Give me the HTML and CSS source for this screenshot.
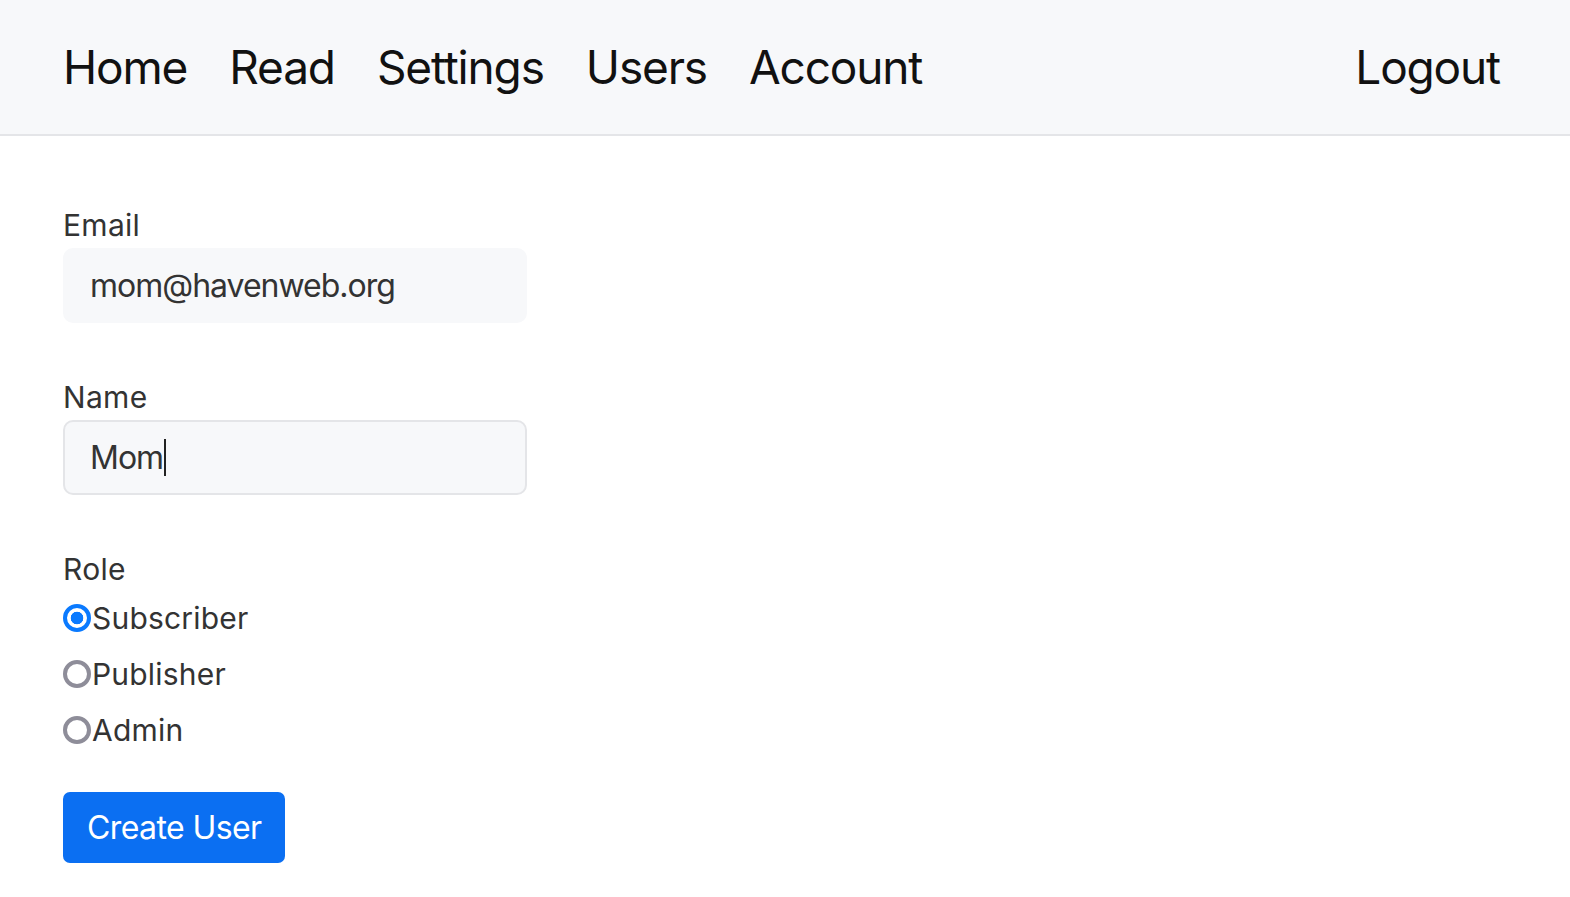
FILE: index.html
```html
<!DOCTYPE html>
<html lang="en">
<head>
    <meta charset="UTF-8">
    <meta name="viewport" content="width=device-width, initial-scale=1.0">
    <title>Create User</title>
    <link rel="stylesheet" href="styles.css">
</head>
<body>
    <nav class="navbar">
        <a class="nav-link" href="#">Home</a>
        <a class="nav-link" href="#">Read</a>
        <a class="nav-link" href="#">Settings</a>
        <a class="nav-link" href="#">Users</a>
        <a class="nav-link" href="#">Account</a>
        <a class="nav-link nav-logout" href="#">Logout</a>
    </nav>
    <form class="user-form">
        <div class="form-group">
            <label class="form-label">Email</label>
            <div class="form-input plain">mom@havenweb.org</div>
        </div>
        <div class="form-group">
            <label class="form-label">Name</label>
            <div class="form-input">Mom<span class="caret"></span></div>
        </div>
        <div class="form-group role-group">
            <label class="form-label">Role</label>
            <label class="radio-row"><input type="radio" name="role" checked>Subscriber</label>
            <label class="radio-row"><input type="radio" name="role">Publisher</label>
            <label class="radio-row"><input type="radio" name="role">Admin</label>
        </div>
        <button type="button" class="btn-primary">Create User</button>
    </form>
</body>
</html>
```

FILE: styles.css
```css
:root {
    --nav-bg: #f7f8fa;
    --border-color: #e4e5e8;
    --text-color: #333;
    --accent-color: #0a7aff;
    --button-color: #0b6ff2;
}

body {
    margin: 0;
    font-family: 'Inter', 'Noto Sans', sans-serif;
    color: var(--text-color);
    background: #fff;
}

.navbar {
    display: flex;
    align-items: center;
    gap: 42px;
    height: 134px;
    padding: 0 70px 0 63px;
    background-color: var(--nav-bg);
    border-bottom: 2px solid var(--border-color);
}

.nav-link {
    font-size: 46px;
    letter-spacing: -1.15px;
    color: #111;
    text-decoration: none;
}

.nav-logout {
    margin-left: auto;
}

.user-form {
    padding: 72px 0 0 63px;
}

.form-group {
    margin-bottom: 57px;
}

.form-label {
    display: block;
    font-size: 30px;
    line-height: 35px;
    letter-spacing: 0.3px;
    margin-bottom: 5px;
}

.form-input {
    box-sizing: border-box;
    display: flex;
    align-items: center;
    width: 464px;
    height: 75px;
    padding: 0 25px;
    font-size: 32px;
    letter-spacing: -1px;
    background-color: var(--nav-bg);
    border: 2px solid var(--border-color);
    border-radius: 10px;
}

.form-input.plain {
    border-color: var(--nav-bg);
}

.caret {
    display: inline-block;
    width: 2px;
    height: 37px;
    margin-left: 1px;
    background: #222;
}

.role-group {
    margin-bottom: 34px;
}

.role-group .form-label {
    margin-bottom: 3px;
}

.radio-row {
    display: flex;
    align-items: center;
    height: 56px;
    font-size: 30px;
    letter-spacing: 0.2px;
}

.radio-row input {
    appearance: none;
    -webkit-appearance: none;
    box-sizing: border-box;
    width: 28px;
    height: 28px;
    margin: 0 1px 0 0;
    border: 4px solid #8e8d99;
    border-radius: 50%;
    background: #fff;
}

.radio-row input:checked {
    border-color: var(--accent-color);
    background: radial-gradient(circle, var(--accent-color) 0 6px, #fff 6.6px);
}

.btn-primary {
    height: 71px;
    padding: 0 24px;
    font-family: inherit;
    font-size: 32px;
    letter-spacing: -0.6px;
    color: #fff;
    background-color: var(--button-color);
    border: none;
    border-radius: 7px;
    cursor: pointer;
}
```
